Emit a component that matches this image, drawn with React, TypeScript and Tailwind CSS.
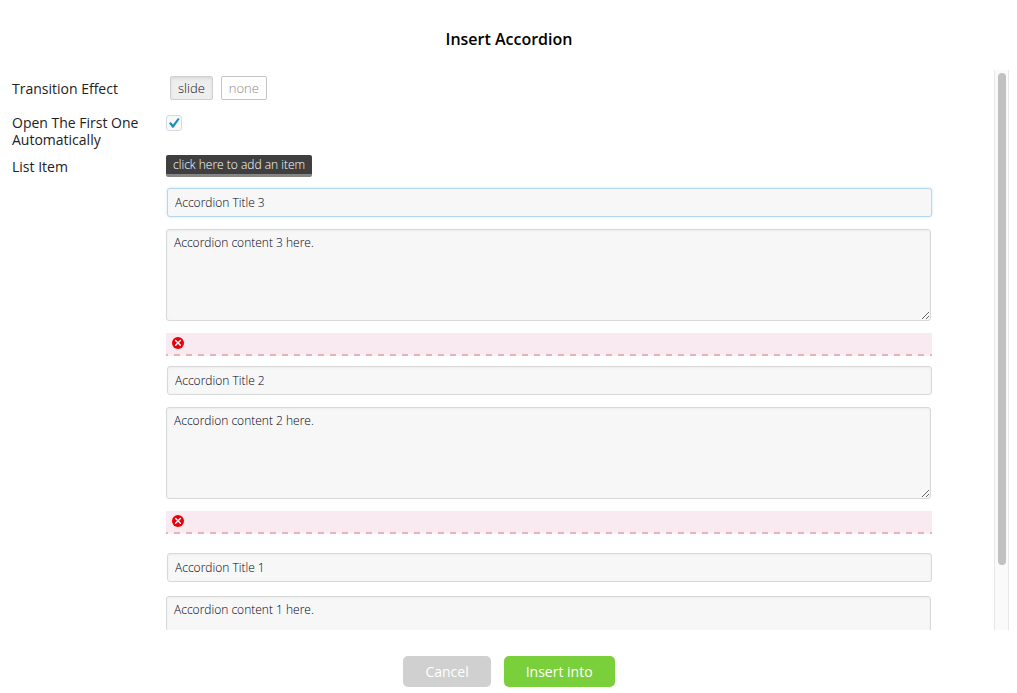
import { useState } from "react";

interface Item {
  id: number;
  title: string;
  content: string;
}

const initialItems: Item[] = [
  { id: 3, title: "Accordion Title 3", content: "Accordion content 3 here." },
  { id: 2, title: "Accordion Title 2", content: "Accordion content 2 here." },
  { id: 1, title: "Accordion Title 1", content: "Accordion content 1 here." },
];

function RemoveIcon() {
  return (
    <svg viewBox="0 0 12 12" className="block size-3" aria-hidden="true">
      <circle cx="6" cy="6" r="6" fill="#e90008" />
      <path d="M3.6 3.4 8.4 8.2M8.4 3.4 3.6 8.2" stroke="#fff" strokeWidth="1.4" strokeLinecap="round" />
    </svg>
  );
}

function ItemFields({ item, focused, last, onRemove }: { item: Item; focused: boolean; last: boolean; onRemove: () => void }) {
  return (
    <div className={last ? "pt-[9px]" : ""}>
      <input
        type="text"
        aria-label={`Title ${item.id}`}
        defaultValue={item.title}
        className={`ml-px block h-[29px] w-full rounded-[3px] border bg-[#f7f7f7] px-[7px] text-[12px] font-light text-[#000010] outline-none ${
          focused ? "border-[#b5d6ec] shadow-[0_0_3px_#c5e4f7]" : "border-[#d7d9d9] shadow-[inset_0_1px_2px_#ececec]"
        }`}
      />
      <textarea
        aria-label={`Content ${item.id}`}
        defaultValue={item.content}
        className={`block h-[92px] w-full resize rounded-[3px] border border-[#d7d9d9] bg-[#f7f7f7] px-[7px] py-[5px] text-[12px] leading-4 font-light text-[#000010] shadow-[inset_0_1px_2px_#ececec] outline-none ${
          last ? "mt-[14px]" : "mt-3"
        }`}
      />
      <div className="mt-3 -mr-px flex h-[23px] flex-col bg-[#f8eaf0]">
        <div className="flex-1 px-[6px] pt-1">
          <button type="button" aria-label={`Remove item ${item.id}`} onClick={onRemove} className="block cursor-pointer">
            <RemoveIcon />
          </button>
        </div>
        <div className="h-[2px] bg-[repeating-linear-gradient(90deg,#e6b5b8_0,#e6b5b8_2px,#fbf1f4_2px,#fbf1f4_8px,#e6b5b8_8px,#e6b5b8_12px)]" />
      </div>
    </div>
  );
}

export default function App() {
  const [items, setItems] = useState<Item[]>(initialItems);
  const [effect, setEffect] = useState("slide");
  const [openFirst, setOpenFirst] = useState(true);

  const addItem = () =>
    setItems((current) => {
      const id = Math.max(0, ...current.map((item) => item.id)) + 1;
      return [{ id, title: `Accordion Title ${id}`, content: `Accordion content ${id} here.` }, ...current];
    });

  return (
    <div className="flex h-screen flex-col bg-white font-['Open_Sans',sans-serif] text-[14px] text-[#222]">
      <header className="flex h-[70px] shrink-0 items-center justify-center pt-2 pl-px">
        <h1 className="text-[16px] font-semibold text-black">Insert Accordion</h1>
      </header>

      <div className="flex min-h-0 flex-1 pr-2">
        <main className="min-w-0 flex-1 overflow-hidden pr-[63px] pl-3">
          <div className="grid grid-cols-[154px_1fr]">
            <span className="pt-2">Transition Effect</span>
            <div className="flex h-[44px] gap-2 pt-[6px] pl-1">
              {["slide", "none"].map((name) => (
                <button
                  key={name}
                  type="button"
                  aria-pressed={effect === name}
                  onClick={() => setEffect(name)}
                  className={`h-6 cursor-pointer rounded-[2px] border px-[7px] text-[13px] leading-[22px] font-light ${
                    effect === name
                      ? "border-[#d0d0d0] bg-[#eeeeee] text-[#111] shadow-[inset_0_2px_3px_#dcdcdc]"
                      : "border-[#c4c4c4] bg-white text-[#888]"
                  }`}
                >
                  {name}
                </button>
              ))}
            </div>

            <label htmlFor="open-first" className="h-10 leading-[17px]">
              Open The First One Automatically
            </label>
            <span className="relative mt-px block size-4">
              <input
                id="open-first"
                type="checkbox"
                checked={openFirst}
                onChange={(event) => setOpenFirst(event.target.checked)}
                className="block size-4 appearance-none rounded-[3px] border border-[#d3dae0] bg-[#f9f9f9]"
              />
              {openFirst && (
                <svg viewBox="0 0 16 16" className="pointer-events-none absolute inset-0 size-4" aria-hidden="true">
                  <path d="M3 8.2 4.8 6.9 7 9.4 12 3l1.7 1L7.5 12.7H6.3Z" fill="#1e8cbe" />
                </svg>
              )}
            </span>

            <span className="pt-[2px]">List Item</span>
            <div className="min-w-0 pt-px">
              <button
                type="button"
                onClick={addItem}
                className="block h-[22px] cursor-pointer rounded-[2px] border-b-3 border-[#858585] bg-[#3f3f3f] px-[7px] text-[12px] leading-[19px] font-light text-white"
              >
                click here to add an item
              </button>
              <div className="mt-[11px] flex flex-col gap-[10px]">
                {items.map((item, index) => (
                  <ItemFields
                    key={item.id}
                    item={item}
                    focused={index === 0}
                    last={index === items.length - 1}
                    onRemove={() => setItems((current) => current.filter((other) => other.id !== item.id))}
                  />
                ))}
              </div>
            </div>
          </div>
        </main>
        <div className="w-[15px] shrink-0 border-x border-[#e7e7e7] bg-[#fafafa] pt-[3px] pr-1 pl-[3px]">
          <div className="h-[88.4%] w-2 rounded-full bg-[#c1c1c1]" />
        </div>
      </div>

      <footer className="flex h-[63px] shrink-0 justify-center gap-[13px] pt-[26px] pl-px">
        <button type="button" className="h-[31px] cursor-pointer rounded-[5px] bg-[#d0d0d0] px-[22px] font-medium text-white">
          Cancel
        </button>
        <button type="button" className="h-[31px] cursor-pointer rounded-[5px] bg-[#7ad03a] px-[22px] font-medium text-white">
          Insert into
        </button>
      </footer>
    </div>
  );
}
